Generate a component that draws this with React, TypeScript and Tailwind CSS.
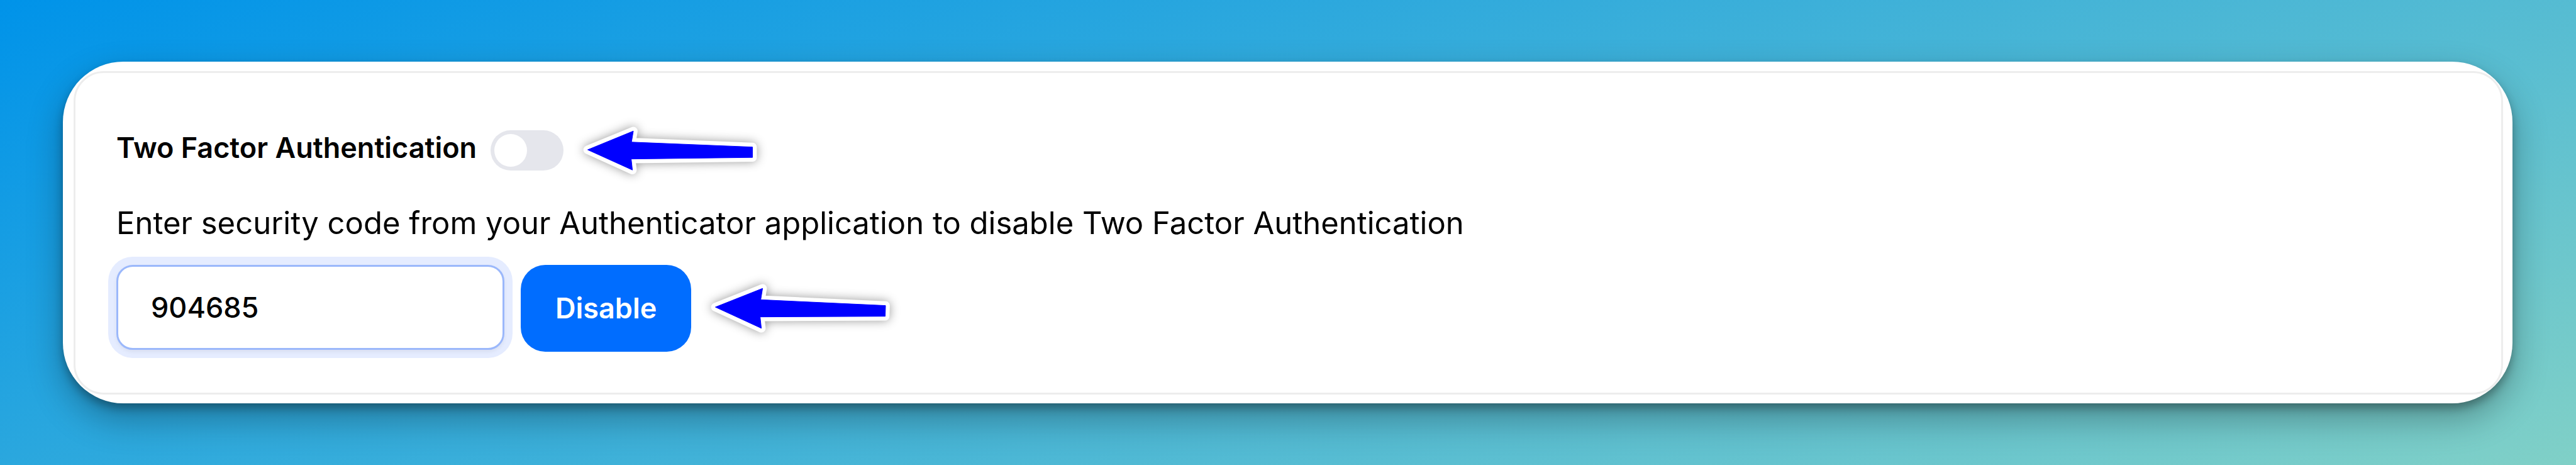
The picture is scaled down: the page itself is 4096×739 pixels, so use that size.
import { useState } from "react";

type ArrowProps = { viewBox: string; d: string; className: string };

function Arrow({ viewBox, d, className }: ArrowProps) {
  return (
    <svg
      aria-hidden="true"
      viewBox={viewBox}
      className={`shrink-0 overflow-visible drop-shadow-[0_0_8px_rgba(0,0,0,0.4)] ${className}`}
    >
      <path d={d} fill="#fff" stroke="#fff" strokeWidth="14" strokeLinejoin="round" />
      <path d={d} fill="#0000ff" stroke="#0000ff" strokeWidth="1" strokeLinejoin="round" />
    </svg>
  );
}

export default function App() {
  const [enabled, setEnabled] = useState(false);
  const [code, setCode] = useState("904685");

  return (
    <main className="min-h-screen bg-[linear-gradient(160deg,#0093E9_0%,#80D0C7_100%)] pt-[98px] pr-[101px] pb-[98px] pl-[100px] font-['Inter',sans-serif] text-black">
      <div className="rounded-[96px] bg-white pt-[15px] pr-[15px] pb-[14px] pl-[17px] shadow-[0_24px_56px_rgba(0,0,0,0.3),0_8px_14px_rgba(0,0,0,0.28)]">
        <section className="rounded-[48px] border-[3px] border-[#ededed] px-[65px] pt-[85px] pb-[65px]">
          <div className="flex items-center">
            <label htmlFor="two-factor" className="pb-2 text-[45px] leading-[56px] font-semibold">
              Two Factor Authentication
            </label>
            <span className="relative ml-[22px] flex h-16 w-[116px] shrink-0">
              <input
                id="two-factor"
                type="checkbox"
                role="switch"
                checked={enabled}
                onChange={(e) => setEnabled(e.target.checked)}
                className="peer h-full w-full cursor-pointer appearance-none rounded-full bg-[#e5e6ec] checked:bg-[#006dff]"
              />
              <span className="pointer-events-none absolute top-[6px] left-[6px] size-[52px] rounded-full bg-white peer-checked:left-[58px]" />
            </span>
            <Arrow
              className="ml-[31px] h-[76px] w-[277px]"
              viewBox="949 207 284 78"
              d="M956.5 245 L1031 214.5 L1028 232.5 L1225.500 240.500 L1225.500 257.500 L1027.500 260 L1029.500 278 Z"
            />
          </div>
          <p className="mt-[42px] text-[49px] leading-[72px]">
            Enter security code from your Authenticator application to disable Two Factor Authentication
          </p>
          <form className="mt-[30px] flex items-center" onSubmit={(e) => e.preventDefault()}>
            <input
              type="text"
              inputMode="numeric"
              aria-label="Security code"
              value={code}
              onChange={(e) => setCode(e.target.value)}
              className="h-[135px] w-[617px] self-start rounded-[26px] border-[3px] border-[#9bb8fb] bg-white px-[52px] text-[45px] font-medium shadow-[0_3px_6px_rgba(0,0,0,0.06),0_0_0_13px_#e5ecff] outline-none"
            />
            <button
              type="submit"
              className="ml-[26px] h-[138px] rounded-[39px] bg-[#006dff] px-[55px] text-[45px] font-semibold text-white"
            >
              Disable
            </button>
            <Arrow
              className="ml-[31px] h-[78px] w-[286px]"
              viewBox="1160 461 293 80"
              d="M1167.500 499 L1244.500 468.500 L1241.500 487 L1445 496.500 L1444.500 514 L1240.500 515 L1242.500 533.500 Z"
            />
          </form>
        </section>
      </div>
    </main>
  );
}
